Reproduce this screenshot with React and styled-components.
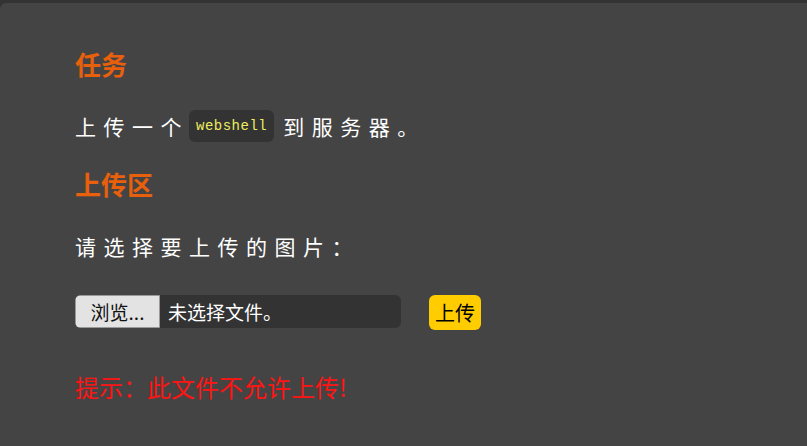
import React from "react";
import styled, { createGlobalStyle } from "styled-components";

const GlobalStyle = createGlobalStyle`
  html, body {
    margin: 0;
    padding: 0;
    background: #333;
  }
  body {
    padding-top: 3px;
    font-family: "Noto Sans CJK SC", "Noto Sans", sans-serif;
  }
`;

const Panel = styled.main`
  background: #444;
  border-top-left-radius: 6px;
  min-height: 443px;
  box-sizing: border-box;
  padding: 40px 75px;
  color: #fff;
`;

const Heading = styled.h2`
  margin: 0;
  font-size: 26px;
  line-height: 42px;
  font-weight: 700;
  color: #e8600c;
`;

const Text = styled.p`
  margin: 25px 0 21px;
  font-size: 21px;
  line-height: 32px;
  letter-spacing: 7.5px;
  color: #fff;
`;

const Code = styled.code`
  display: inline-block;
  font-family: "Liberation Mono", monospace;
  font-size: 14px;
  letter-spacing: 0.5px;
  line-height: 32px;
  padding: 0 7px;
  margin: 0 9px 0 0;
  border-radius: 6px;
  background: #333;
  color: #ecec5e;
  vertical-align: top;
`;

const Form = styled.form`
  display: flex;
  align-items: flex-start;
  gap: 28px;
  margin-top: 33px;
`;

const FilePicker = styled.label`
  display: flex;
  align-items: stretch;
  width: 326px;
  height: 33px;
  border-radius: 6px;
  background: #333;
  overflow: hidden;
  cursor: pointer;
`;

const BrowseButton = styled.span`
  display: flex;
  align-items: center;
  justify-content: center;
  width: 85px;
  background: #e3e3e3;
  border: 1px solid #999;
  border-radius: 3px 0 0 3px;
  box-sizing: border-box;
  color: #111;
  font-size: 19px;
`;

const FileName = styled.span`
  display: flex;
  align-items: center;
  padding-left: 8px;
  font-size: 19px;
  color: #fff;
`;

const Submit = styled.button`
  height: 35px;
  padding: 0 6px;
  border: none;
  border-radius: 6px;
  background: #ffcc00;
  color: #000;
  font-family: inherit;
  font-size: 20px;
  cursor: pointer;
`;

const Warning = styled.p`
  margin: 41px 0 0;
  font-size: 24px;
  line-height: 32px;
  color: #ff1414;
`;

export default function App() {
  return (
    <>
      <GlobalStyle />
      <Panel>
        <Heading>任务</Heading>
        <Text>
          上传一个<Code>webshell</Code>到服务器。
        </Text>
        <Heading>上传区</Heading>
        <Text>请选择要上传的图片：</Text>
        <Form onSubmit={(e) => e.preventDefault()}>
          <FilePicker>
            <BrowseButton>浏览...</BrowseButton>
            <FileName>未选择文件。</FileName>
          </FilePicker>
          <Submit type="submit">上传</Submit>
        </Form>
        <Warning>提示：此文件不允许上传!</Warning>
      </Panel>
    </>
  );
}
